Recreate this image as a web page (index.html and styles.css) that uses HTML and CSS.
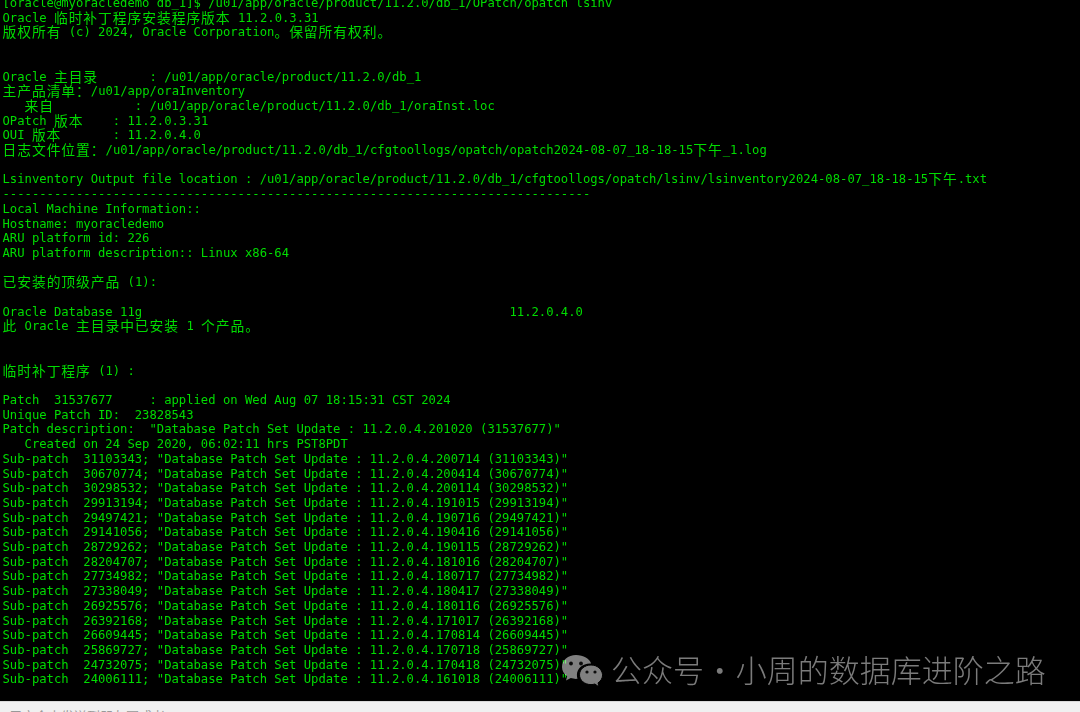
FILE: index.html
```html
<!DOCTYPE html>
<html lang="zh">
<head>
<meta charset="utf-8">
<title>opatch lsinv</title>
<link rel="stylesheet" href="styles.css">
</head>
<body>
<main class="screen">
<pre class="term">[oracle@myoracledemo db_1]$ /u01/app/oracle/product/11.2.0/db_1/OPatch/opatch lsinv
Oracle <span class="c">临时补丁程序安装程序版本</span> 11.2.0.3.31
<span class="c">版权所有</span> (c) 2024, Oracle Corporation<span class="c">。保留所有权利。</span>


Oracle <span class="c">主目录</span>       : /u01/app/oracle/product/11.2.0/db_1
<span class="c">主产品清单：</span>/u01/app/oraInventory
   <span class="c">来自</span>           : /u01/app/oracle/product/11.2.0/db_1/oraInst.loc
OPatch <span class="c">版本</span>    : 11.2.0.3.31
OUI <span class="c">版本</span>       : 11.2.0.4.0
<span class="c">日志文件位置：</span>/u01/app/oracle/product/11.2.0/db_1/cfgtoollogs/opatch/opatch2024-08-07_18-18-15<span class="c">下午</span>_1.log

Lsinventory Output file location : /u01/app/oracle/product/11.2.0/db_1/cfgtoollogs/opatch/lsinv/lsinventory2024-08-07_18-18-15<span class="c">下午</span>.txt
--------------------------------------------------------------------------------
Local Machine Information::
Hostname: myoracledemo
ARU platform id: 226
ARU platform description:: Linux x86-64

<span class="c">已安装的顶级产品</span> (1):

Oracle Database 11g                                                  11.2.0.4.0
<span class="c">此</span> Oracle <span class="c">主目录中已安装</span> 1 <span class="c">个产品。</span>


<span class="c">临时补丁程序</span> (1) :

Patch  31537677     : applied on Wed Aug 07 18:15:31 CST 2024
Unique Patch ID:  23828543
Patch description:  "Database Patch Set Update : 11.2.0.4.201020 (31537677)"
   Created on 24 Sep 2020, 06:02:11 hrs PST8PDT
Sub-patch  31103343; "Database Patch Set Update : 11.2.0.4.200714 (31103343)"
Sub-patch  30670774; "Database Patch Set Update : 11.2.0.4.200414 (30670774)"
Sub-patch  30298532; "Database Patch Set Update : 11.2.0.4.200114 (30298532)"
Sub-patch  29913194; "Database Patch Set Update : 11.2.0.4.191015 (29913194)"
Sub-patch  29497421; "Database Patch Set Update : 11.2.0.4.190716 (29497421)"
Sub-patch  29141056; "Database Patch Set Update : 11.2.0.4.190416 (29141056)"
Sub-patch  28729262; "Database Patch Set Update : 11.2.0.4.190115 (28729262)"
Sub-patch  28204707; "Database Patch Set Update : 11.2.0.4.181016 (28204707)"
Sub-patch  27734982; "Database Patch Set Update : 11.2.0.4.180717 (27734982)"
Sub-patch  27338049; "Database Patch Set Update : 11.2.0.4.180417 (27338049)"
Sub-patch  26925576; "Database Patch Set Update : 11.2.0.4.180116 (26925576)"
Sub-patch  26392168; "Database Patch Set Update : 11.2.0.4.171017 (26392168)"
Sub-patch  26609445; "Database Patch Set Update : 11.2.0.4.170814 (26609445)"
Sub-patch  25869727; "Database Patch Set Update : 11.2.0.4.170718 (25869727)"
Sub-patch  24732075; "Database Patch Set Update : 11.2.0.4.170418 (24732075)"
Sub-patch  24006111; "Database Patch Set Update : 11.2.0.4.161018 (24006111)"</pre>
<div class="mark">
<svg class="wx" viewBox="0 0 42 34" width="42" height="34" aria-hidden="true">
<path class="wx-a" d="M15 1C7 1 1 6.300 1 13c0 3.800 2 7 5.200 9.300L5 26.500l4.800-2.400c1.600.5 3.300.8 5.200.8.500 0 1 0 1.500-.1-.4-1.200-.6-2.400-.6-3.700 0-6.500 5.800-11.500 13-11.500h1.200C28.700 4.600 22.500 1 15 1z"/>
<path class="wx-b" d="M30 11c-6.400 0-11.500 4.300-11.500 9.800S23.600 30.600 30 30.600c1.300 0 2.700-.2 3.900-.6l4.100 2.900-1-4c2.900-1.900 4.600-4.800 4.600-8.100C41 15.300 36.400 11 30 11z"/>
<circle class="wx-e" cx="10" cy="9.500" r="1.900"/><circle class="wx-e" cx="20" cy="9.500" r="1.900"/>
<circle class="wx-e" cx="26" cy="18" r="1.600"/><circle class="wx-e" cx="34" cy="18" r="1.600"/>
</svg>
<span class="mark-text">公众号 · 小周的数据库进阶之路</span>
</div>
</main>
<footer class="bar"><span class="bar-text">用户个人发送到朋友圈或者</span></footer>
</body>
</html>
```
FILE: styles.css
```css
html, body {
  margin: 0;
  padding: 0;
  height: 712px;
  overflow: hidden;
  background: #000;
}
.screen {
  position: relative;
  height: 701px;
  overflow: hidden;
  background: #000;
}
.term {
  margin: -4px 0 0 2.500px;
  font-family: "DejaVu Sans Mono", monospace;
  font-size: 12.215px;
  line-height: 14.696px;
  color: #00dc00;
  white-space: pre;
  filter: blur(0.35px);
}
.c {
  font-family: "Noto Sans CJK SC", sans-serif;
  font-size: 13.800px;
  letter-spacing: 0.920px;
  line-height: 1px;
  vertical-align: -0.500px;
}
.mark {
  position: absolute;
  left: 561px;
  top: 652px;
  display: flex;
  align-items: center;
  gap: 8px;
  filter: blur(0.35px);
}
.wx { display: block; }
.wx-a { fill: rgba(255, 255, 255, 0.5); }
.wx-b { fill: #808080; stroke: #000; stroke-width: 1px; }
.wx-e { fill: #0c0c0c; }
.mark-text {
  font-family: "Noto Sans CJK SC", sans-serif;
  font-weight: 300;
  font-size: 31px;
  word-spacing: -6.500px;
  line-height: 34px;
  margin-bottom: 3px;
  color: #7b7b7b;
}
.bar {
  height: 10px;
  overflow: hidden;
  background: #f0f0f0;
  border-top: 1px solid #d8d8d8;
}
.bar-text {
  display: block;
  margin: 5px 0 0 9px;
  font-family: "Noto Sans CJK SC", sans-serif;
  font-size: 13px;
  line-height: 18px;
  color: #999;
}
```
